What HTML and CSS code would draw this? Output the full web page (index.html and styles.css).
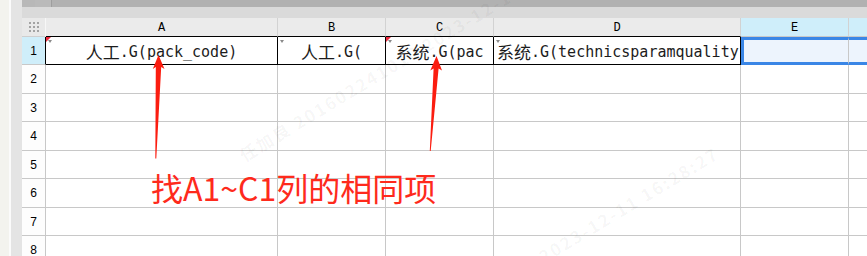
FILE: index.html
```html
<!DOCTYPE html>
<html>
<head>
    <meta charset="utf-8" />
    <title>sheet</title>
    <link rel="stylesheet" href="styles.css">
</head>
<body>
<div class="app">
    <div class="side"></div>
    <div class="main">
        <div class="tabs">
            <span class="tab"></span>
            <span class="tab tab2"></span>
        </div>
        <div class="ribbon"></div>
        <div class="sheet">
            <div class="corner">
                <svg width="10" height="10" viewBox="0 0 10 10">
                    <g fill="#a3a3a3">
                        <rect x="0" y="0" width="2" height="2"/><rect x="4" y="0" width="2" height="2"/><rect x="8" y="0" width="2" height="2"/>
                        <rect x="0" y="4" width="2" height="2"/><rect x="4" y="4" width="2" height="2"/><rect x="8" y="4" width="2" height="2"/>
                        <rect x="0" y="8" width="2" height="2"/><rect x="4" y="8" width="2" height="2"/><rect x="8" y="8" width="2" height="2"/>
                    </g>
                </svg>
            </div>
            <div class="colhead dark">A</div>
            <div class="colhead dark">B</div>
            <div class="colhead dark">C</div>
            <div class="colhead dark">D</div>
            <div class="colhead sel">E</div>
            <div class="colhead sel last"></div>

            <div class="rowhead sel black">1</div>
            <div class="cell boxed center note flag"><span class="cn">人工</span>.G(pack_code)</div>
            <div class="cell boxed center flag"><span class="cn">人工</span>.G(</div>
            <div class="cell boxed center note flag"><span class="cn">系统</span>.G(pac</div>
            <div class="cell boxed left flag"><span class="cn">系统</span>.G(technicsparamquality</div>
            <div class="cell picked first"></div>
            <div class="cell picked rest"></div>

            <div class="rowhead">2</div><div class="cell"></div><div class="cell"></div><div class="cell"></div><div class="cell"></div><div class="cell"></div><div class="cell last"></div>
            <div class="rowhead">3</div><div class="cell"></div><div class="cell"></div><div class="cell"></div><div class="cell"></div><div class="cell"></div><div class="cell last"></div>
            <div class="rowhead">4</div><div class="cell"></div><div class="cell"></div><div class="cell"></div><div class="cell"></div><div class="cell"></div><div class="cell last"></div>
            <div class="rowhead">5</div><div class="cell"></div><div class="cell"></div><div class="cell"></div><div class="cell"></div><div class="cell"></div><div class="cell last"></div>
            <div class="rowhead">6</div><div class="cell"></div><div class="cell"></div><div class="cell"></div><div class="cell"></div><div class="cell"></div><div class="cell last"></div>
            <div class="rowhead">7</div><div class="cell"></div><div class="cell"></div><div class="cell"></div><div class="cell"></div><div class="cell"></div><div class="cell last"></div>
            <div class="rowhead">8</div><div class="cell"></div><div class="cell"></div><div class="cell"></div><div class="cell"></div><div class="cell"></div><div class="cell last"></div>
        </div>
    </div>

    <!-- watermark -->
    <div class="wm wm1">任加良 201602241010 2023-12-11 16:28:27</div>
    <div class="wm wm2">任加良 201602241010 2023-12-11 16:28:27</div>

    <!-- annotation -->
    <svg class="arrows" width="867" height="256" viewBox="0 0 867 256">
        <polygon fill="#fb1d10" points="158.5,55 164.5,69 161.2,67 156.3,158.5 155.3,158.5 155.8,67 152.8,69"/>
        <polygon fill="#fb1d10" points="436.5,56 442,70.5 438.6,68.5 430.7,151 429.8,151 433.6,68.5 430.3,70.5"/>
    </svg>
    <div class="note-text">找A1~C1列的相同项</div>
</div>
</body>
</html>
```

FILE: styles.css
```css
body{
    margin: 0px;
    background: #fff;
}
.app{
    position: relative;
    display: flex;
    width: 867px;
    height: 256px;
    overflow: hidden;
}
.side{
    width: 22px;
    flex: none;
    background: linear-gradient(to right, #f3f3ee 0, #f3f3ee 9px, #fbfbfb 9px, #fbfbfb 11px, #e4e4e4 11px);
}
.main{
    flex: 1;
    display: flex;
    flex-direction: column;
}
.tabs{
    flex: none;
    height: 7px;
    background: #b1b1b1;
    display: flex;
}
.tab{
    width: 13px;
    background: #b8b8b8;
}
.tab2{
    width: 16px;
    background: #bababa;
    border-right: 1px solid #9e9e9e;
}
.ribbon{
    flex: none;
    height: 11px;
    background: #dadada;
}
.sheet{
    flex: none;
    display: grid;
    grid-template-columns: 24px 232px 108px 108px 247px 108px 18px;
    grid-template-rows: 19px 28px repeat(7, 28.5px);
}
.sheet > div{
    box-sizing: border-box;
}
.corner{
    background: #e9e9e9;
    border-right: 1px solid #f7f7f7;
    border-bottom: 1px solid #cfcfcf;
    display: flex;
    align-items: center;
    justify-content: center;
}
.colhead{
    background: #ebebeb;
    border-right: 1px solid #d2d2d2;
    border-bottom: 1px solid #c8c8c8;
    font-family: "Liberation Mono", monospace;
    font-size: 12px;
    color: #000;
    display: flex;
    align-items: center;
    justify-content: center;
    padding-top: 2px;
}
.colhead.dark{
    border-bottom-color: #000;
}
.colhead.sel{
    background: #cfeefa;
}
.colhead.last{
    border-right: none;
}
.rowhead{
    background: #fdfdfd;
    border-right: 1px solid #c8c8c8;
    border-bottom: 1px solid #c8c8c8;
    font-family: "Liberation Sans", Arial, sans-serif;
    font-size: 12px;
    color: #000;
    display: flex;
    align-items: center;
    justify-content: center;
    padding-top: 1px;
}
.rowhead.sel{
    background: #cfeefa;
}
.rowhead.black{
    border-right-color: #000;
}
.cell{
    position: relative;
    border-right: 1px solid #c8c8c8;
    border-bottom: 1px solid #c8c8c8;
    background: #fff;
    font-family: "DejaVu Sans Mono", "Noto Sans CJK SC", monospace;
    font-size: 15px;
    color: #1c1c1c;
    white-space: nowrap;
    overflow: hidden;
    display: flex;
    align-items: center;
    padding-top: 2px;
}
.cell.last{
    border-right: none;
}
.cn{
    font-family: "Noto Sans CJK SC", sans-serif;
    font-size: 17px;
}
.boxed{
    border-right-color: #000;
    border-bottom-color: #000;
}
.center{
    justify-content: center;
}
.left{
    justify-content: flex-start;
    padding-left: 3px;
}
.picked{
    background: #edf4fd;
    border-top: 3px solid #3a86e6;
    border-bottom: 3px solid #3a86e6;
}
.picked.first{
    border-left: 3px solid #3a86e6;
    border-right: 1px solid #c8c8c8;
}
.picked.rest{
    border-right: none;
}
/* comment marker and dropdown hint */
.note::before{
    content: "";
    position: absolute;
    left: 0;
    top: 0;
    border-top: 5px solid #ec2a3e;
    border-right: 5px solid transparent;
}
.flag::after{
    content: "";
    position: absolute;
    left: 2px;
    top: 3px;
    border-left: 2px solid transparent;
    border-right: 2px solid transparent;
    border-top: 3px solid #8a8a8a;
}
.arrows{
    position: absolute;
    left: 0;
    top: 0;
    pointer-events: none;
}
.note-text{
    position: absolute;
    left: 151px;
    top: 171px;
    font-family: "Noto Sans CJK SC", sans-serif;
    font-size: 32px;
    line-height: 32px;
    color: #fe2a1c;
    white-space: nowrap;
}
.wm{
    position: absolute;
    font-family: "Noto Sans CJK SC", sans-serif;
    font-size: 17px;
    font-weight: bold;
    letter-spacing: 2px;
    line-height: 20px;
    color: rgba(0, 0, 0, 0.045);
    white-space: nowrap;
    transform-origin: 0 100%;
    transform: rotate(-31deg);
    pointer-events: none;
}
.wm1{
    left: 246px;
    top: 145px;
}
.wm2{
    left: 363px;
    top: 356px;
}
```
